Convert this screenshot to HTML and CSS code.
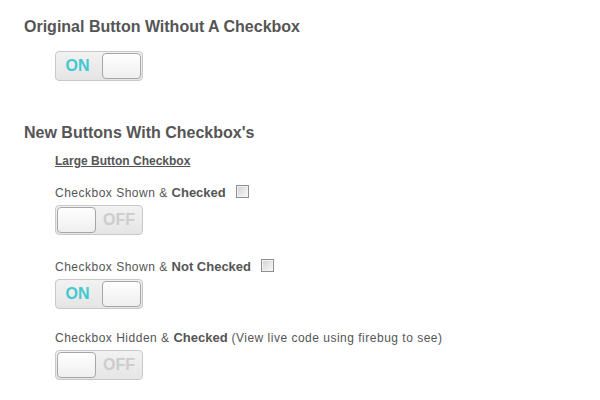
FILE: index.html
```html
<!DOCTYPE html>
<html>
<head>
<meta charset="utf-8">
<link rel="stylesheet" href="styles.css">
</head>
<body>
<div class="page">
  <h2 class="title">Original Button Without A Checkbox</h2>
  <div class="group">
    <div class="toggle on first"><span class="label">ON</span><span class="knob"></span></div>
  </div>

  <h2 class="title second">New Buttons With Checkbox's</h2>
  <div class="group">
    <div class="sub">Large Button Checkbox</div>

    <div class="caption c1">Checkbox Shown &amp; <b>Checked</b> <span class="cb"></span></div>
    <div class="toggle off"><span class="knob"></span><span class="label">OFF</span></div>

    <div class="caption c2">Checkbox Shown &amp; <b>Not Checked</b> <span class="cb"></span></div>
    <div class="toggle on"><span class="label">ON</span><span class="knob"></span></div>

    <div class="caption c3">Checkbox Hidden &amp; <b>Checked</b> (View live code using firebug to see)</div>
    <div class="toggle off"><span class="knob"></span><span class="label">OFF</span></div>
  </div>
</div>
</body>
</html>
```

FILE: styles.css
```css
html, body {
  margin: 0;
  padding: 0;
  background: #fff;
}
.page {
  padding: 17px 0 0 24px;
  font-family: "Liberation Sans", Arial, sans-serif;
  color: #555;
}
.title {
  margin: 0;
  font-size: 16px;
  font-weight: bold;
  line-height: 20px;
  color: #555;
}
.title.second {
  margin-top: 42px;
}
.group {
  padding-left: 31px;
}
.sub {
  margin-top: 11px;
  font-size: 12px;
  font-weight: bold;
  text-decoration: underline;
  line-height: 15px;
  color: #555;
}
.caption {
  font-size: 12px;
  letter-spacing: 0.5px;
  line-height: 16px;
  height: 16px;
  color: #555;
  white-space: nowrap;
}
.c1 { margin-top: 16px; }
.c2 { margin-top: 24px; }
.c3 { margin-top: 21px; }
.caption b {
  font-size: 13px;
  letter-spacing: 0;
}
.cb {
  display: inline-block;
  vertical-align: top;
  width: 11px;
  height: 11px;
  margin: 0 0 0 6px;
  border: 1px solid #8f8f8f;
  background: linear-gradient(135deg, #d0d0d0, #fbfbfb);
  box-shadow: inset 0 0 0 1px #f2f2f2;
}
.toggle {
  margin-top: 4px;
  width: 84px;
  height: 28px;
  border: 1px solid #c8c8c8;
  border-radius: 4px;
  background: linear-gradient(#f2f2f2, #e5e5e5);
  display: flex;
  align-items: center;
  padding: 0 1px;
  box-sizing: content-box;
}
.toggle.first {
  margin-top: 14px;
}
.knob {
  width: 37px;
  height: 24px;
  border: 1px solid #a6a6a6;
  border-radius: 4px;
  background: linear-gradient(#ffffff, #efefef);
}
.label {
  font-size: 16px;
  font-weight: bold;
  flex: 1;
  text-align: center;
}
.on .label {
  color: #43c8d0;
  padding-right: 4px;
}
.off .label {
  color: #cccccc;
  padding-left: 1px;
}
```
